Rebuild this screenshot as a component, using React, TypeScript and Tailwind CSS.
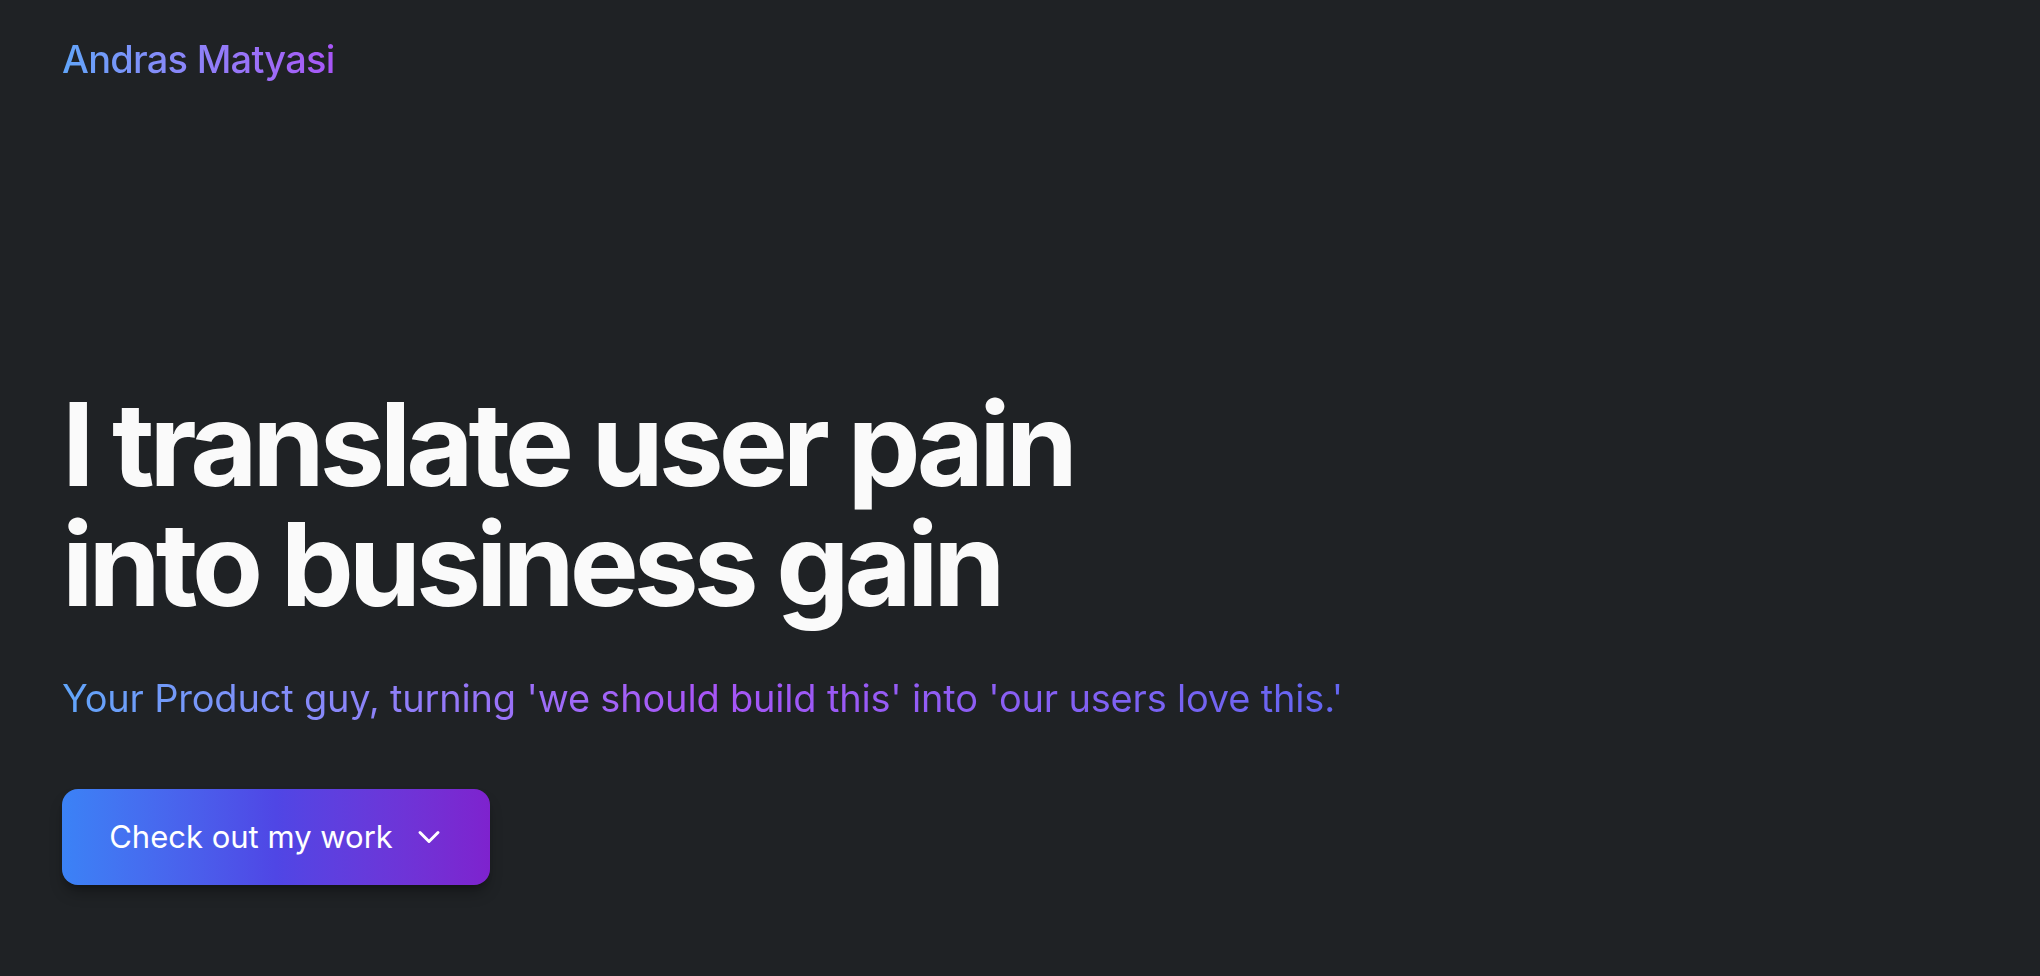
import { ChevronDown } from "lucide-react";

const font = { fontFamily: "Inter, 'Noto Sans', sans-serif" };

export default function App() {
  return (
    <div className="min-h-screen w-full bg-[#1f2225] text-[#fafafa]" style={font}>
      <header className="px-[62px] pt-[35px]">
        <a
          href="#"
          className="inline-block bg-gradient-to-r from-[#60a5fa] to-[#a855f7] bg-clip-text text-[38px] font-medium leading-[48px] tracking-[-0.02em] text-transparent"
        >
          Andras Matyasi
        </a>
      </header>

      <main className="px-[62px] pt-[301px] pb-[90px]">
        <h1 className="text-[116px] font-bold leading-[120px] tracking-[-0.043em] text-[#fafafa]">
          I translate user pain
          <br />
          into business gain
        </h1>

        <p className="mt-[50px] inline-block bg-gradient-to-r from-[#60a5fa] via-[#a855f7] to-[#6366f1] bg-clip-text text-[38px] leading-[48px] tracking-[-0.005em] text-transparent">
          Your Product guy, turning 'we should build this' into 'our users love this.'
        </p>

        <div className="mt-[67px]">
          <button
            type="button"
            className="flex h-[96px] w-[428px] items-center justify-center gap-[18px] rounded-2xl bg-gradient-to-r from-[#3b82f6] via-[#4f46e5] to-[#7e22ce] pl-[4px] text-[31px] text-white shadow-lg shadow-black/30"
          >
            <span>Check out my work</span>
            <ChevronDown className="h-9 w-9" strokeWidth={2} />
          </button>
        </div>
      </main>
    </div>
  );
}
